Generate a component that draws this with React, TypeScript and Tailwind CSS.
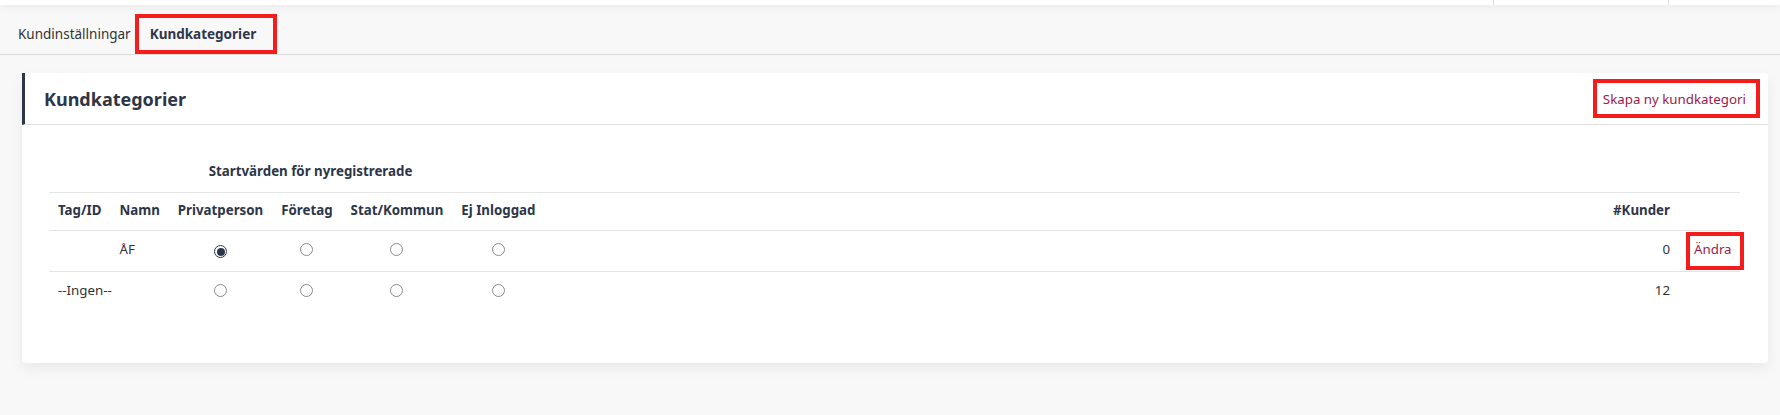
import React from "react";

type Row = {
  tag: string;
  name: string;
  values: boolean[];
  count: number;
  editable: boolean;
};

const ROWS: Row[] = [
  { tag: "", name: "ÅF", values: [true, false, false, false], count: 0, editable: true },
  { tag: "--Ingen--", name: "", values: [false, false, false, false], count: 12, editable: false },
];

function Radio({ checked }: { checked: boolean }) {
  return checked ? (
    <span className="inline-flex items-center justify-center w-[13px] h-[13px] rounded-full border border-[#2d3648] bg-white">
      <span className="w-[8px] h-[8px] rounded-full bg-[#2d3648]" />
    </span>
  ) : (
    <span className="inline-block w-[13px] h-[13px] rounded-full border border-[#8a8a8a] bg-white" />
  );
}

export default function App() {
  return (
    <div className="min-h-screen bg-[#f8f8f8] font-['Noto_Sans',sans-serif] text-[13.3px] text-[#333]">
      {/* Top bar */}
      <div className="relative z-10 h-[5px] bg-white shadow-[0_2px_8px_rgba(0,0,0,0.08)] flex justify-end">
        <div className="w-[175px] border-l border-[#ddd]" />
        <div className="w-[112px] border-l border-[#ddd]" />
      </div>

      {/* Tabs */}
      <div className="h-[50px] flex items-end border-b border-[#dcdcdc] pl-[18px]">
        <div className="h-[40px] flex items-center text-[13.5px] text-[#333]">
          Kundinställningar
        </div>
        <div className="ml-[4px] h-[40px] border-4 border-[#f51c1c] pl-[11px] pr-[17px] flex items-center text-[13.5px] font-bold text-[#2d3648]">
          Kundkategorier
        </div>
      </div>

      {/* Card */}
      <div className="ml-[22px] mr-[12px] mt-[18px] bg-white rounded-sm shadow-[0_6px_14px_rgba(0,0,0,0.06)] h-[290px]">
        <div className="h-[52px] border-l-[3px] border-[#2d3648] border-b border-b-[#e2e2e2] flex items-center justify-between pl-[19px] pr-[8px]">
          <h2 className="text-[18px] font-bold text-[#2d3648] pt-[1px]">Kundkategorier</h2>
          <a className="h-[39px] border-4 border-[#f51c1c] pl-[6px] pr-[10px] flex items-center pt-[2px] text-[#9b1b4f]">
            Skapa ny kundkategori
          </a>
        </div>

        <div className="pt-[29px] pl-[27px] pr-[28px]">
          <table className="w-full border-collapse">
            <thead>
              <tr className="border-b border-[#e4e4e4]">
                <th colSpan={2} className="h-[38px]" />
                <th colSpan={3} className="h-[38px] text-center font-bold text-[#2d3648] pb-[1px]">
                  Startvärden för nyregistrerade
                </th>
                <th colSpan={4} />
              </tr>
              <tr className="border-b border-[#e4e4e4] text-[#2d3648]">
                <th className="h-[38px] px-[9px] text-left font-bold whitespace-nowrap">Tag/ID</th>
                <th className="px-[9px] text-left font-bold">Namn</th>
                <th className="px-[9px] text-center font-bold">Privatperson</th>
                <th className="px-[9px] text-center font-bold">Företag</th>
                <th className="px-[9px] text-center font-bold whitespace-nowrap">Stat/Kommun</th>
                <th className="px-[9px] text-center font-bold whitespace-nowrap">Ej Inloggad</th>
                <th className="w-full" />
                <th className="pr-[16px] text-right font-bold">#Kunder</th>
                <th className="w-[54px]" />
              </tr>
            </thead>
            <tbody>
              {ROWS.map((row, i) => (
                <tr key={i} className={i < ROWS.length - 1 ? "border-b border-[#e4e4e4]" : ""}>
                  {row.tag ? (
                    <td colSpan={2} className="h-[38px] pl-[9px] align-top pt-[9px] whitespace-nowrap">
                      {row.tag}
                    </td>
                  ) : (
                    <>
                      <td className="px-[9px]" />
                      <td className="px-[9px] align-top pt-[9px]">{row.name}</td>
                    </>
                  )}
                  {row.values.map((v, j) => (
                    <td key={j} className="text-center align-top pt-[11px]">
                      <Radio checked={v} />
                    </td>
                  ))}
                  <td />
                  <td className="pr-[16px] text-right align-top pt-[9px]">{row.count}</td>
                  <td className="align-top pt-[1px] pb-[1px]">
                    {row.editable && (
                      <a className="w-[58px] h-[38px] -mr-1 border-4 border-[#f51c1c] pl-[4px] flex items-center pb-[2px] text-[#9b1b4f]">
                        Ändra
                      </a>
                    )}
                  </td>
                </tr>
              ))}
            </tbody>
          </table>
        </div>
      </div>
    </div>
  );
}
